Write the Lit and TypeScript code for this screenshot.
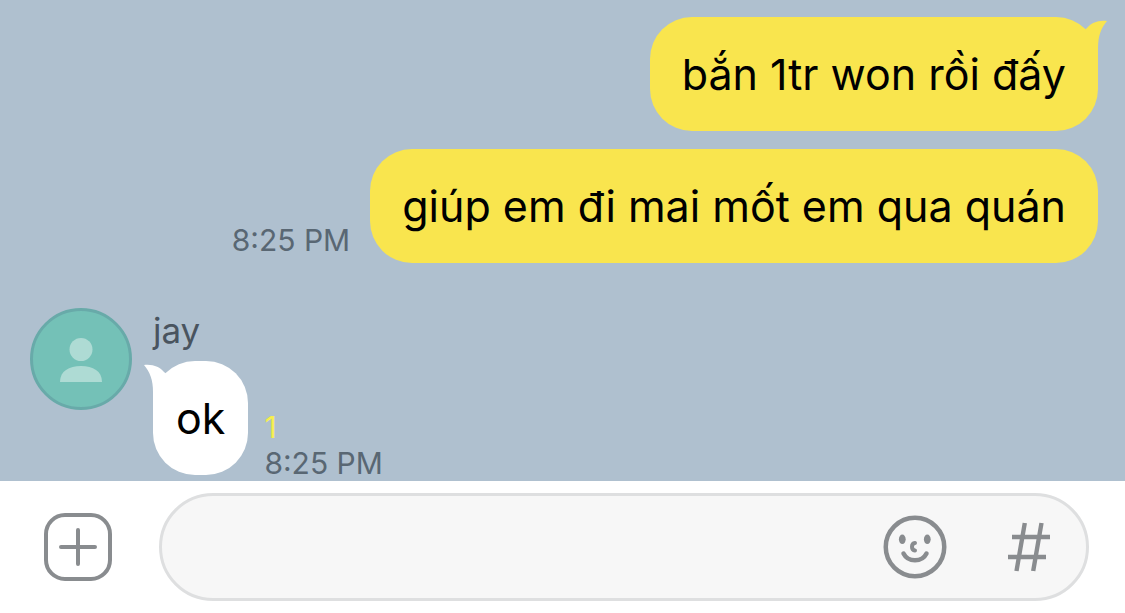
import { LitElement, html, css, svg } from "lit";
import { customElement, property } from "lit/decorators.js";
import { classMap } from "lit/directives/class-map.js";

@customElement("chat-bubble")
class ChatBubble extends LitElement {
  @property({ type: Boolean }) mine = false;
  @property({ type: Boolean }) tail = false;

  static styles = css`
    :host { display: block; }
    .bubble {
      position: relative;
      box-sizing: border-box;
      padding: 30px 23px;
      border-radius: 42px;
      background: #ffffff;
      color: #000000;
      font-size: 43px;
      line-height: 54px;
    }
    .mine { padding: 30px 32px; background: #f9e54e; }
    .text { margin: 0; }
    .tail { position: absolute; top: 3px; left: -9px; width: 30px; height: 40px; fill: #ffffff; }
    .mine .tail { left: auto; right: -9px; fill: #f9e54e; transform: scaleX(-1); }
  `;

  render() {
    return html`<div class=${classMap({ bubble: true, mine: this.mine })}>
      ${this.tail
        ? html`<svg class="tail" viewBox="0 0 30 40" aria-hidden="true">
            <path d="M0 1 C9 0 16 3 20 8 L30 16 V40 H9 V28 C9 16 6 8 0 1Z" />
          </svg>`
        : ""}
      <p class="text"><slot></slot></p>
    </div>`;
  }
}

@customElement("app-root")
class AppRoot extends LitElement {
  static styles = css`
    :host {
      display: flex;
      flex-direction: column;
      min-height: 100vh;
      background: #ffffff;
      font-family: Inter, "Noto Sans", sans-serif;
    }
    .chat {
      flex: 1;
      display: flex;
      flex-direction: column;
      gap: 18px;
      padding: 17px 27px 6px 30px;
      background: #afc0cf;
    }
    .sent { display: flex; justify-content: flex-end; align-items: flex-end; gap: 20px; }
    .meta { color: #596773; font-size: 30px; line-height: 36px; padding-bottom: 5px; white-space: nowrap; }
    .received { display: flex; gap: 21px; margin-top: auto; }
    .avatar { flex: none; width: 102px; height: 102px; }
    .name { margin: 0 0 9px; color: #49545f; font-size: 35px; line-height: 44px; font-weight: 400; }
    .reply { display: flex; align-items: flex-end; gap: 16px; }
    .stack { padding-bottom: 0; margin-bottom: -6px; }
    .unread { color: #f6ee4e; display: block; }
    .composer { display: flex; align-items: center; gap: 47px; padding: 12px 36px 12px 44px; }
    button {
      flex: none;
      display: block;
      padding: 0;
      border: 0;
      background: none;
      color: #898c8f;
      cursor: pointer;
    }
    button svg { display: block; width: 100%; height: 100%; fill: none; stroke: currentColor; }
    .add { width: 68px; height: 68px; }
    .field {
      flex: 1;
      display: flex;
      align-items: center;
      box-sizing: border-box;
      height: 108px;
      padding: 0 36px 0 32px;
      border: 3px solid #dedfe0;
      border-radius: 54px;
      background: #f7f7f7;
    }
    .input {
      flex: 1;
      min-width: 0;
      height: 60px;
      padding: 0;
      border: 0;
      outline: 0;
      background: none;
      font: inherit;
      font-size: 43px;
    }
    .emoji { width: 64px; height: 64px; margin-right: 59px; }
    .hash { width: 44px; height: 50px; }
  `;

  private avatar = svg`
    <circle cx="51" cy="51" r="49.5" fill="#74c1b7" stroke="#68aaa9" stroke-width="3" />
    <circle cx="51" cy="41.5" r="11.5" fill="#aedbd4" />
    <path d="M30 74 C30 63 39 58 51 58 S72 63 72 74Z" fill="#aedbd4" />`;

  render() {
    return html`
      <main class="chat">
        <div class="sent"><chat-bubble mine tail>bắn 1tr won rồi đấy</chat-bubble></div>
        <div class="sent">
          <time class="meta">8:25 PM</time>
          <chat-bubble mine>giúp em đi mai mốt em qua quán</chat-bubble>
        </div>
        <article class="received">
          <svg class="avatar" viewBox="0 0 102 102" aria-hidden="true">${this.avatar}</svg>
          <div>
            <h2 class="name">jay</h2>
            <div class="reply">
              <chat-bubble tail>ok</chat-bubble>
              <div class="meta stack">
                <span class="unread">1</span>
                <time>8:25 PM</time>
              </div>
            </div>
          </div>
        </article>
      </main>
      <form class="composer" @submit=${(e: Event) => e.preventDefault()}>
        <button class="add" type="button" aria-label="Add attachment">
          <svg viewBox="0 0 68 68" stroke-width="4">
            <rect x="2" y="2" width="64" height="64" rx="19" />
            <path d="M34 17V51M17 34H51" stroke-linecap="round" />
          </svg>
        </button>
        <div class="field">
          <input class="input" type="text" aria-label="Message" />
          <button class="emoji" type="button" aria-label="Emoji">
            <svg viewBox="0 0 64 64" stroke-width="4.5" stroke-linecap="round">
              <circle cx="32" cy="32" r="29.25" />
              <ellipse cx="19.3" cy="24.3" rx="3.4" ry="4.8" fill="currentColor" stroke="none" />
              <ellipse cx="44.3" cy="24.3" rx="3.4" ry="4.8" fill="currentColor" stroke="none" />
              <path d="M32 28C28 28.500 28 35 32 35.500" stroke-width="4" />
              <path d="M20.500 38.500C25 47.500 39 47.500 43.500 38.500" />
            </svg>
          </button>
          <button class="hash" type="button" aria-label="Hashtag search">
            <svg viewBox="0 0 44 50" stroke-width="4.4">
              <path d="M18.8 1L10.500 49M35.500 1L27.200 49M6 15H44M2 35H40" />
            </svg>
          </button>
        </div>
      </form>
    `;
  }
}
